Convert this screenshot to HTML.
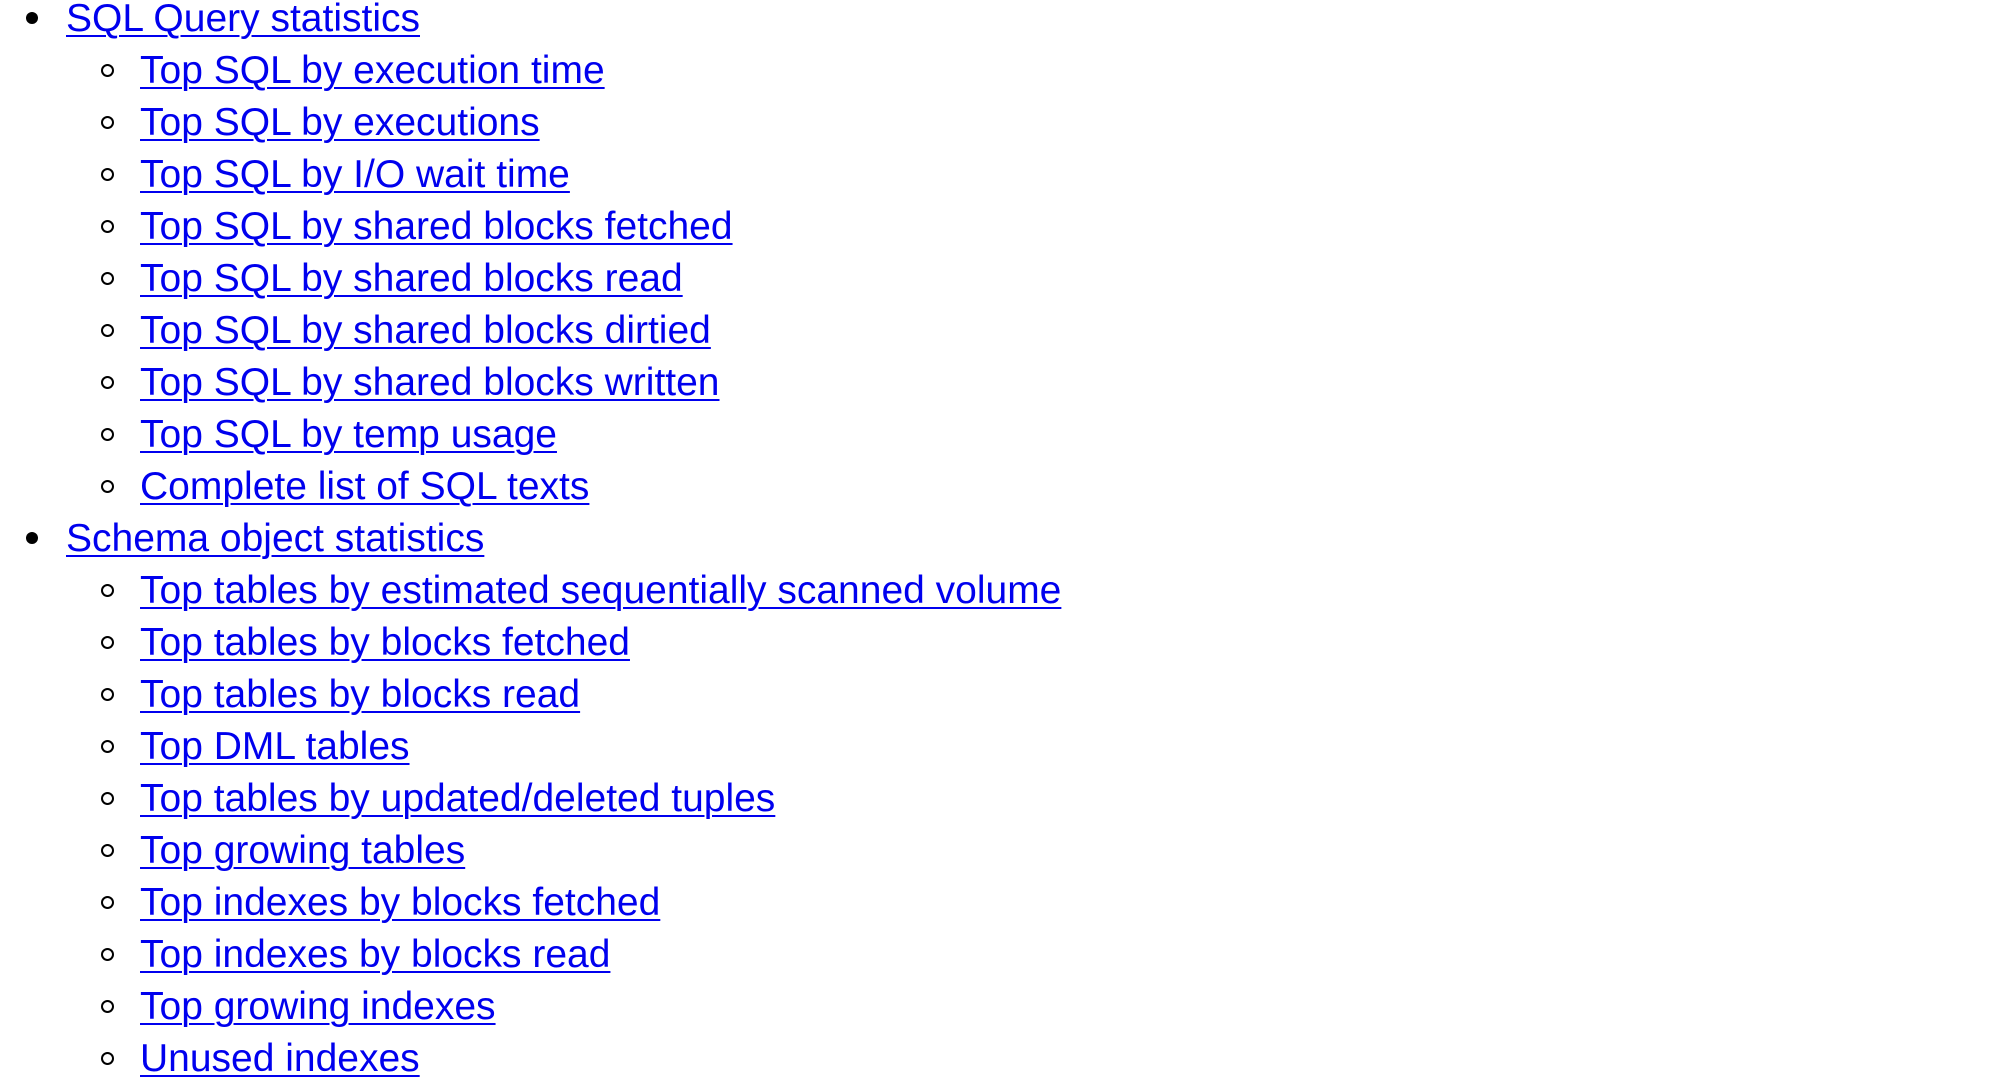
<!DOCTYPE html>
<html><head><meta charset="utf-8"><style>
html,body{margin:0;padding:0;background:#fff;width:2012px;height:1080px;overflow:hidden}
body{font-family:"Liberation Sans",Arial,sans-serif;font-size:39px;line-height:52px}
ul{margin:0;padding:0;list-style:none}
.top{position:absolute;left:0;top:-7px}
li{position:relative;white-space:nowrap}
.l1{padding-left:66px}
.l2{padding-left:140px}
.l1::before{content:"";position:absolute;left:26px;top:19px;width:12px;height:12px;border-radius:50%;background:#000}
.l2::before{content:"";position:absolute;left:101px;top:19px;width:9px;height:9px;border-radius:50%;border:2px solid #000}
a{color:#0000ee;text-decoration:underline;text-decoration-thickness:2px;text-underline-offset:4px}
</style></head><body>
<ul class="top">
<li class="l1"><a>SQL Query statistics</a></li>
<li class="l2"><a>Top SQL by execution time</a></li>
<li class="l2"><a>Top SQL by executions</a></li>
<li class="l2"><a>Top SQL by I/O wait time</a></li>
<li class="l2"><a>Top SQL by shared blocks fetched</a></li>
<li class="l2"><a>Top SQL by shared blocks read</a></li>
<li class="l2"><a>Top SQL by shared blocks dirtied</a></li>
<li class="l2"><a>Top SQL by shared blocks written</a></li>
<li class="l2"><a>Top SQL by temp usage</a></li>
<li class="l2"><a>Complete list of SQL texts</a></li>
<li class="l1"><a>Schema object statistics</a></li>
<li class="l2"><a>Top tables by estimated sequentially scanned volume</a></li>
<li class="l2"><a>Top tables by blocks fetched</a></li>
<li class="l2"><a>Top tables by blocks read</a></li>
<li class="l2"><a>Top DML tables</a></li>
<li class="l2"><a>Top tables by updated/deleted tuples</a></li>
<li class="l2"><a>Top growing tables</a></li>
<li class="l2"><a>Top indexes by blocks fetched</a></li>
<li class="l2"><a>Top indexes by blocks read</a></li>
<li class="l2"><a>Top growing indexes</a></li>
<li class="l2"><a>Unused indexes</a></li>
</ul>
</body></html>
